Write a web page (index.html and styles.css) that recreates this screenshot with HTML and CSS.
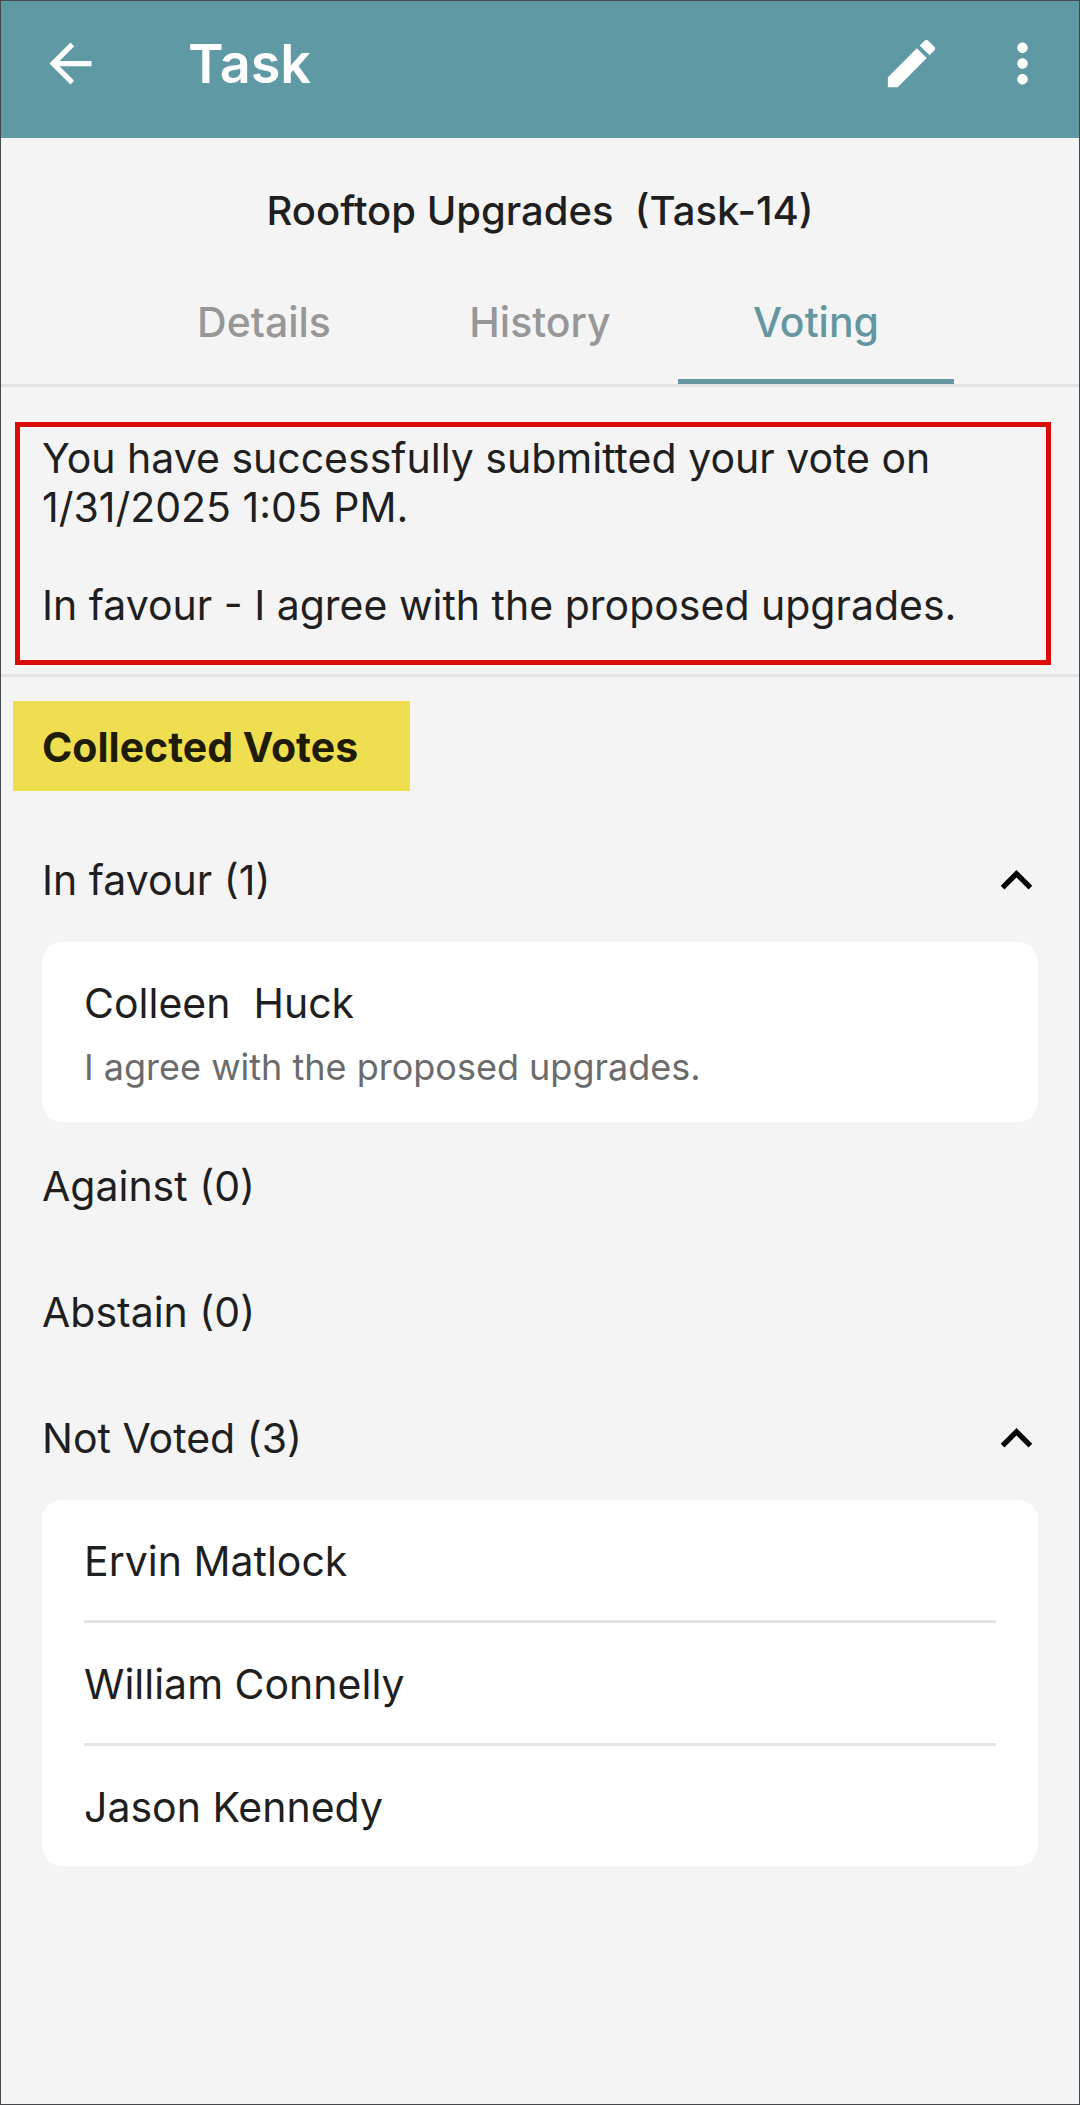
FILE: index.html
```html
<!DOCTYPE html>
<html lang="en">
    <head>
        <meta charset="utf-8">
        <meta name="viewport" content="width=device-width, initial-scale=1">
        <title>Task</title>
        <link rel="stylesheet" href="styles.css">
    </head>
    <body>
        <header class="app-bar">
            <button class="icon-button" aria-label="Back">
                <svg class="icon" viewBox="0 0 24 24"><path d="M20 11H7.83l5.59-5.59L12 4l-8 8 8 8 1.41-1.41L7.83 13H20v-2z"/></svg>
            </button>
            <h1>Task</h1>
            <button class="icon-button" aria-label="Edit">
                <svg class="icon" viewBox="0 0 24 24"><path d="M3 17.25V21h3.75L17.81 9.94l-3.75-3.75L3 17.25zM20.71 7.04c.39-.39.39-1.02 0-1.41l-2.34-2.34c-.39-.39-1.02-.39-1.41 0l-1.83 1.83 3.75 3.75 1.83-1.83z"/></svg>
            </button>
            <button class="icon-button" aria-label="More">
                <svg class="icon" viewBox="0 0 24 24"><path d="M12 8c1.1 0 2-.9 2-2s-.9-2-2-2-2 .9-2 2 .9 2 2 2zm0 2c-1.1 0-2 .9-2 2s.9 2 2 2 2-.9 2-2-.9-2-2-2zm0 6c-1.1 0-2 .9-2 2s.9 2 2 2 2-.9 2-2-.9-2-2-2z"/></svg>
            </button>
        </header>

        <h2 class="task-title">Rooftop Upgrades&nbsp; (Task-14)</h2>

        <nav class="tabs">
            <button class="tab">Details</button>
            <button class="tab">History</button>
            <button class="tab active">Voting</button>
        </nav>

        <section class="my-vote">
            <div class="vote-message">
                <p>You have successfully submitted your vote on 1/31/2025 1:05 PM.</p>
                <p>In favour - I agree with the proposed upgrades.</p>
            </div>
        </section>

        <h3 class="votes-heading">Collected Votes</h3>

        <main class="votes">
            <button class="group">
                In favour (1)
                <svg class="icon" viewBox="0 0 24 24"><path d="M12 8l-6 6 1.41 1.41L12 10.83l4.59 4.58L18 14z"/></svg>
            </button>
            <div class="card">
                <div class="voter with-comment">
                    <p>Colleen&nbsp; Huck</p>
                    <p class="comment">I agree with the proposed upgrades.</p>
                </div>
            </div>

            <button class="group">Against (0)</button>
            <button class="group">Abstain (0)</button>

            <button class="group">
                Not Voted (3)
                <svg class="icon" viewBox="0 0 24 24"><path d="M12 8l-6 6 1.41 1.41L12 10.83l4.59 4.58L18 14z"/></svg>
            </button>
            <div class="card">
                <div class="voter">Ervin Matlock</div>
                <div class="voter">William Connelly</div>
                <div class="voter">Jason Kennedy</div>
            </div>
        </main>
    </body>
</html>
```
FILE: styles.css
```css
* {
    box-sizing: border-box;
}
body {
    margin: 0;
    min-height: 100vh;
    border: 1px solid #44484b;
    background-color: #f4f4f4;
    color: #1f1f1f;
    font-family: Inter, "Liberation Sans", sans-serif;
    font-size: 41px;
    line-height: 49px;
}
h1, h2, h3, p {
    margin: 0;
}
button {
    padding: 0;
    border: none;
    background: none;
    color: inherit;
    font: inherit;
    cursor: pointer;
}
.icon {
    display: block;
    width: 63px;
    height: 63px;
    fill: currentColor;
}

/* top bar */
.app-bar {
    display: flex;
    align-items: center;
    gap: 48px;
    padding: 31px 25px 43px 38px;
    background-color: #5f99a3;
    color: #fff;
}
.app-bar h1 {
    flex: 1;
    margin-left: 38px;
    font-size: 54px;
    font-weight: 600;
    line-height: 63px;
}
.task-title {
    padding: 48px 40px 63px;
    font-size: 40px;
    font-weight: 500;
    text-align: center;
}

/* tabs */
.tabs {
    display: flex;
    justify-content: center;
    border-bottom: 3px solid #e2e2e2;
}
.tab {
    width: 276px;
    padding-bottom: 32px;
    border-bottom: 5px solid transparent;
    color: #979797;
    font-weight: 500;
}
.tab.active {
    border-color: #6496a0;
    color: #6496a0;
}

/* submitted vote */
.my-vote {
    padding: 35px 28px 9px 14px;
    border-bottom: 3px solid #e4e4e4;
}
.vote-message {
    padding: 7px 22px 30px;
    border: 5px solid #da0d0a;
}
.vote-message p + p {
    margin-top: 49px;
}
.votes-heading {
    width: fit-content;
    margin: 24px 12px 25px;
    padding: 22px 52px 19px 29px;
    background-color: #efdf50;
    color: #1f1c05;
    font-size: 41px;
    font-weight: 700;
}

/* vote groups */
.votes {
    padding: 0 41px;
}
.group {
    display: flex;
    justify-content: space-between;
    align-items: center;
    width: 100%;
    padding: 40px 0 37px;
    text-align: left;
}
.group .icon {
    margin: -7px -10px -7px 0;
    color: #000;
}
.card {
    padding: 0 42px;
    border-radius: 20px;
    background-color: #fff;
}
.voter {
    padding: 37px 0 34px;
}
.voter + .voter {
    border-top: 3px solid #e4e4e4;
}
.with-comment {
    padding-bottom: 32px;
}
.comment {
    margin-top: 16px;
    color: #6b6b6b;
    font-size: 36px;
    line-height: 46px;
}
```
